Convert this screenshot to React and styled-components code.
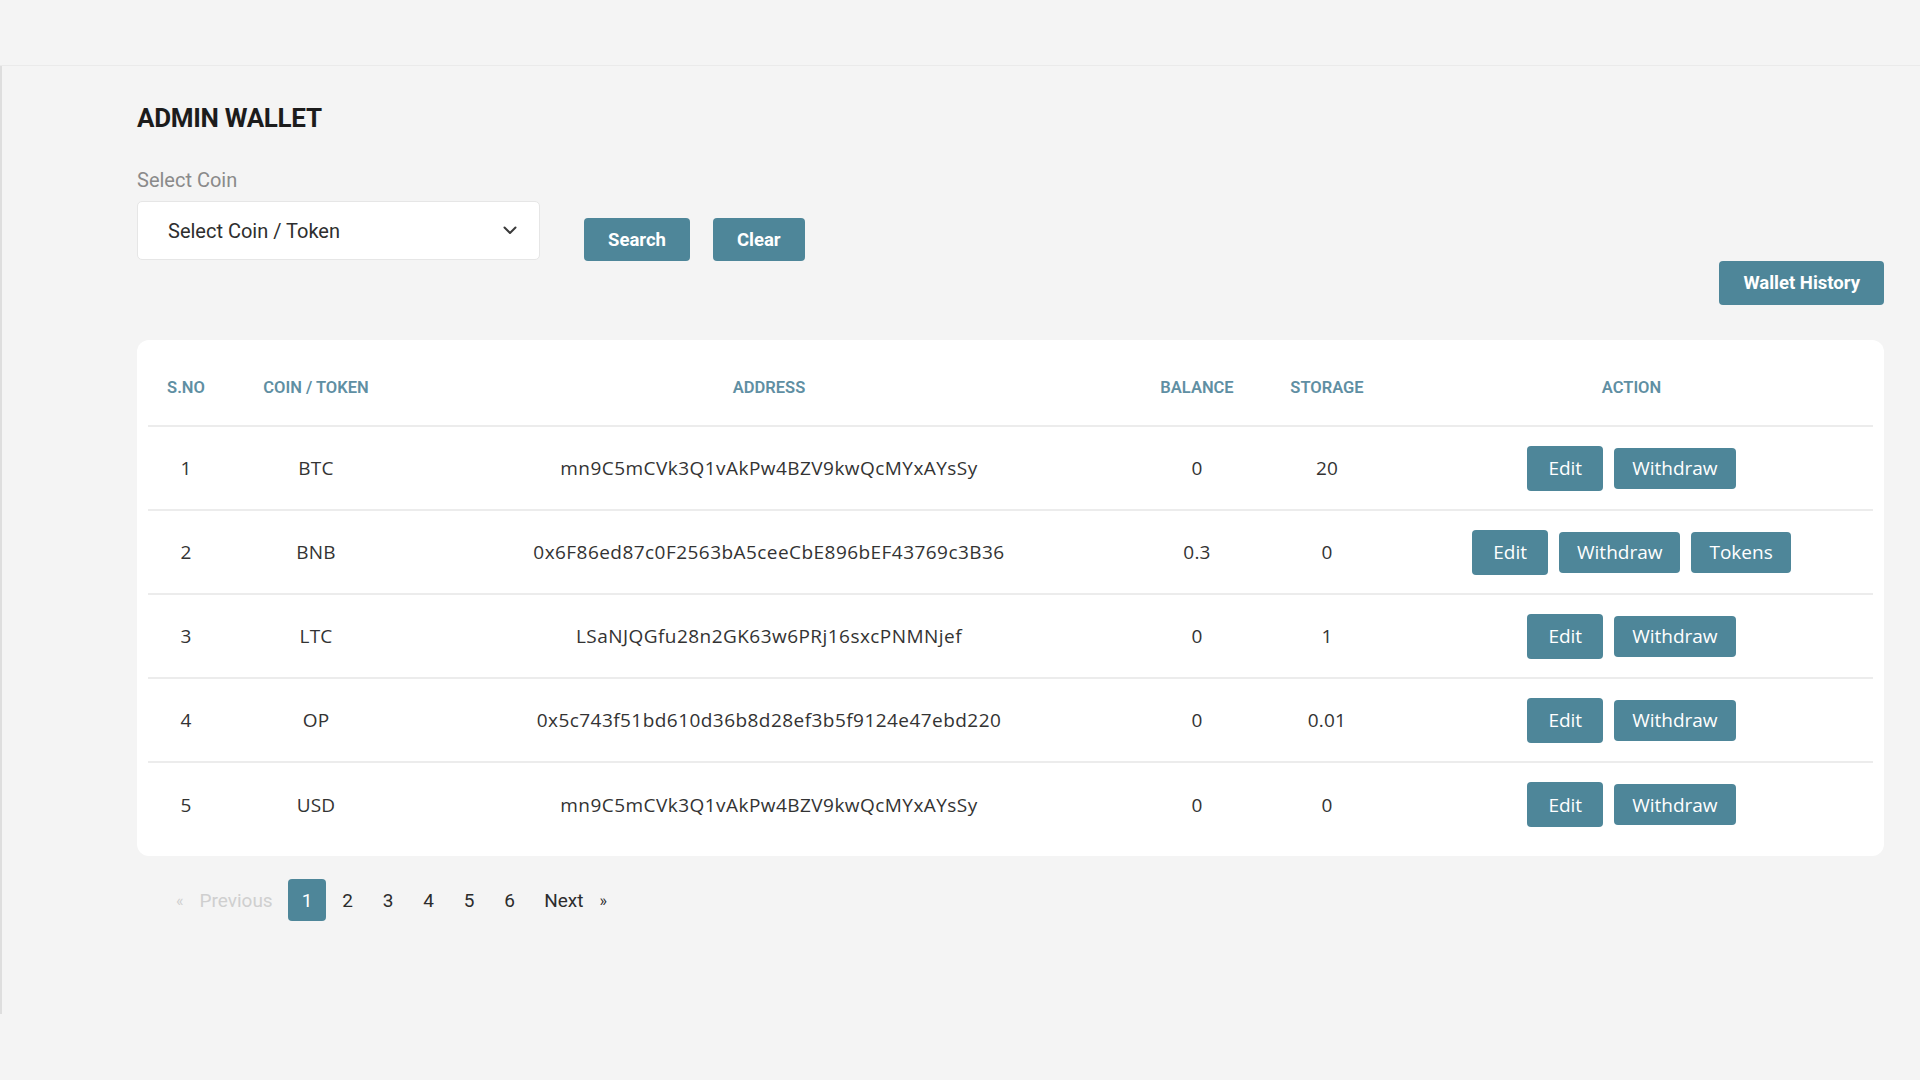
import React from 'react';
import styled, { createGlobalStyle } from 'styled-components';

const GlobalStyle = createGlobalStyle`
  body {
    margin: 0;
    background: #f4f4f4;
    font-family: 'Roboto', 'Liberation Sans', sans-serif;
    color: #333;
  }
  * {
    box-sizing: border-box;
  }
`;

const wallets = [
  { id: 1, coin: 'BTC', address: 'mn9C5mCVk3Q1vAkPw4BZV9kwQcMYxAYsSy', balance: '0', storage: '20' },
  { id: 2, coin: 'BNB', address: '0x6F86ed87c0F2563bA5ceeCbE896bEF43769c3B36', balance: '0.3', storage: '0', tokens: true },
  { id: 3, coin: 'LTC', address: 'LSaNJQGfu28n2GK63w6PRj16sxcPNMNjef', balance: '0', storage: '1' },
  { id: 4, coin: 'OP', address: '0x5c743f51bd610d36b8d28ef3b5f9124e47ebd220', balance: '0', storage: '0.01' },
  { id: 5, coin: 'USD', address: 'mn9C5mCVk3Q1vAkPw4BZV9kwQcMYxAYsSy', balance: '0', storage: '0' },
];

const columns = [
  { label: 'S.No', width: 76 },
  { label: 'Coin / Token', width: 184 },
  { label: 'Address', width: 722 },
  { label: 'Balance', width: 134 },
  { label: 'Storage', width: 126 },
  { label: 'Action', width: 483 },
];

const Chevron = () => (
  <svg width="14" height="9" viewBox="0 0 14 9" fill="none">
    <path d="M1.5 1.5L7 7L12.5 1.5" stroke="#3a3a3a" strokeWidth="2" strokeLinecap="round" strokeLinejoin="round" />
  </svg>
);

const App = () => {
  return (
    <>
      <GlobalStyle />
      <TopBar />
      <Main>
        <Title>ADMIN WALLET</Title>

        <FilterRow>
          <Field>
            <Label>Select Coin</Label>
            <SelectBox>
              <span>Select Coin / Token</span>
              <Chevron />
            </SelectBox>
          </Field>
          <PrimaryButton>Search</PrimaryButton>
          <PrimaryButton>Clear</PrimaryButton>
        </FilterRow>

        <HistoryRow>
          <PrimaryButton $large>Wallet History</PrimaryButton>
        </HistoryRow>

        <Card>
          <Table>
            <colgroup>
              {columns.map((c) => (
                <col key={c.label} style={{ width: c.width }} />
              ))}
            </colgroup>
            <thead>
              <tr>
                {columns.map((c) => (
                  <Th key={c.label}>{c.label}</Th>
                ))}
              </tr>
            </thead>
            <tbody>
              {wallets.map((w) => (
                <Row key={w.id}>
                  <Td>{w.id}</Td>
                  <Td>{w.coin}</Td>
                  <Td $mono>{w.address}</Td>
                  <Td>{w.balance}</Td>
                  <Td>{w.storage}</Td>
                  <Td>
                    <Actions>
                      <ActionButton $edit>Edit</ActionButton>
                      <ActionButton>Withdraw</ActionButton>
                      {w.tokens && <ActionButton>Tokens</ActionButton>}
                    </Actions>
                  </Td>
                </Row>
              ))}
            </tbody>
          </Table>
        </Card>

        <Pagination>
          <PageItem $disabled>
            <Arrow>«</Arrow>Previous
          </PageItem>
          {[1, 2, 3, 4, 5, 6].map((n) => (
            <PageItem key={n} $active={n === 1}>
              {n}
            </PageItem>
          ))}
          <PageItem>
            Next<Arrow $after>»</Arrow>
          </PageItem>
        </Pagination>
      </Main>
    </>
  );
};

const TopBar = styled.header`
  height: 66px;
  border-bottom: 1px solid #eaeaea;
`;

const Main = styled.main`
  min-height: 948px;
  border-left: 2px solid #dedede;
  padding: 36px 36px 0 135px;
`;

const Title = styled.h1`
  margin: 0;
  font-size: 26px;
  line-height: 32px;
  font-weight: 700;
  color: #1c1c1c;
  letter-spacing: -0.3px;
`;

const FilterRow = styled.div`
  display: flex;
  align-items: flex-end;
  gap: 23px;
  margin-top: 35px;
`;

const Field = styled.div`
  display: flex;
  flex-direction: column;
  margin-right: 21px;
`;

const Label = styled.label`
  font-size: 20px;
  line-height: 22px;
  color: #8a8a8a;
  margin-bottom: 10px;
`;

const SelectBox = styled.div`
  width: 403px;
  height: 59px;
  background: #fff;
  border: 1px solid #e6e6e6;
  border-radius: 5px;
  display: flex;
  align-items: center;
  justify-content: space-between;
  padding: 0 22px 0 30px;
  font-size: 20px;
  color: #2e2e2e;
`;

const PrimaryButton = styled.button`
  height: ${(p) => (p.$large ? '44px' : '43px')};
  padding: 0 24px;
  margin-bottom: -1px;
  border: none;
  border-radius: 4px;
  background: #4e8699;
  color: #fff;
  font-family: 'Roboto', 'Liberation Sans', sans-serif;
  font-size: 18.5px;
  font-weight: 700;
  cursor: pointer;
`;

const HistoryRow = styled.div`
  display: flex;
  justify-content: flex-end;
  margin-top: 1px;
`;

const Card = styled.div`
  margin-top: 36px;
  background: #fff;
  border-radius: 12px;
  padding: 10px 11px 10px;
`;

const Table = styled.table`
  width: 100%;
  table-layout: fixed;
  border-collapse: collapse;
`;

const Th = styled.th`
  height: 76px;
  text-align: center;
  text-transform: uppercase;
  font-size: 16.5px;
  font-weight: 600;
  color: #5f8fa3;
  border-bottom: 2px solid #ececec;
  padding: 0;
`;

const Row = styled.tr`
  & + & td {
    border-top: 2px solid #ececec;
  }
`;

const Td = styled.td`
  height: 84px;
  text-align: center;
  font-family: 'Open Sans', 'Liberation Sans', sans-serif;
  font-size: 19px;
  letter-spacing: ${(p) => (p.$mono ? '0.45px' : '0.2px')};
  color: #333;
  padding: 0;
  white-space: nowrap;
`;

const Actions = styled.div`
  display: flex;
  justify-content: center;
  align-items: center;
  gap: 11px;
`;

const ActionButton = styled.button`
  height: ${(p) => (p.$edit ? '45px' : '41px')};
  padding: ${(p) => (p.$edit ? '0 21px' : '0 18px')};
  border: none;
  border-radius: 4px;
  background: #4e8699;
  color: #fff;
  font-family: 'Open Sans', 'Liberation Sans', sans-serif;
  font-size: 19px;
  cursor: pointer;
`;

const Pagination = styled.nav`
  display: flex;
  align-items: center;
  gap: 2.5px;
  margin-top: 23px;
  padding-left: 26px;
`;

const PageItem = styled.span`
  min-width: 38px;
  height: 42px;
  padding: 0 13px;
  display: inline-flex;
  align-items: center;
  justify-content: center;
  border-radius: 4px;
  font-size: 19px;
  color: ${(p) => (p.$disabled ? '#cfcfcf' : p.$active ? '#fff' : '#2c2c2c')};
  background: ${(p) => (p.$active ? '#4e8699' : 'transparent')};
  cursor: pointer;
`;

const Arrow = styled.span`
  font-size: 16px;
  margin: ${(p) => (p.$after ? '0 0 0 16px' : '0 16px 0 0')};
`;

export default App;
